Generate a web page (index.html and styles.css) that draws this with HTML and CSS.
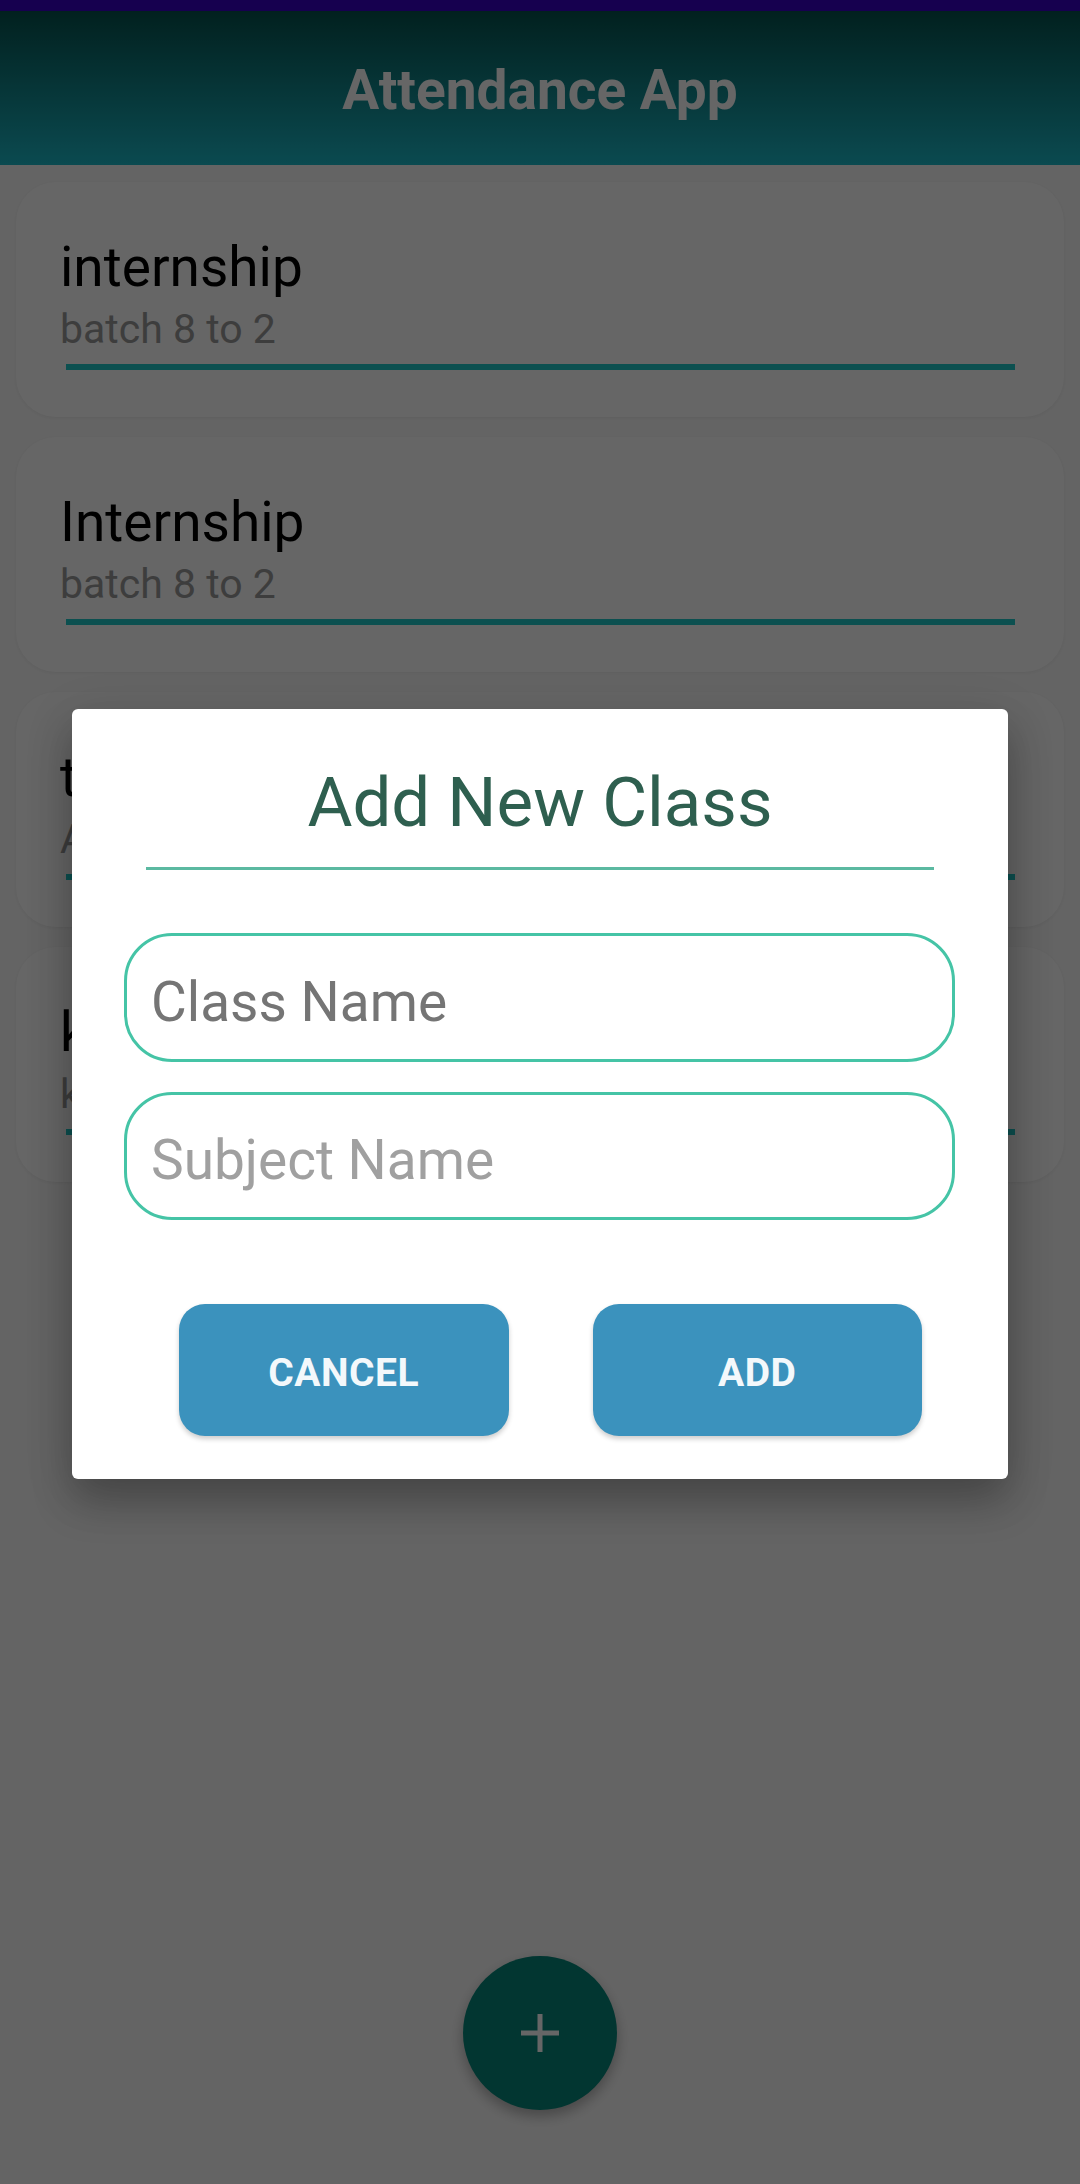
FILE: index.html
```html
<!DOCTYPE html>
<html lang="en">
<head>
<meta charset="utf-8">
<title>Attendance App</title>
<link rel="stylesheet" href="styles.css">
</head>
<body>
<div class="screen">
  <div class="statusbar"></div>
  <header class="appbar">
    <h1 class="appbar-title">Attendance App</h1>
  </header>

  <main class="class-list">
    <div class="class-card">
      <div class="class-name">internship</div>
      <div class="class-subject">batch 8 to 2</div>
      <div class="class-rule"></div>
    </div>
    <div class="class-card">
      <div class="class-name">Internship</div>
      <div class="class-subject">batch 8 to 2</div>
      <div class="class-rule"></div>
    </div>
    <div class="class-card">
      <div class="class-name">test</div>
      <div class="class-subject">Android</div>
      <div class="class-rule"></div>
    </div>
    <div class="class-card">
      <div class="class-name">kk</div>
      <div class="class-subject">kk</div>
      <div class="class-rule"></div>
    </div>
  </main>

  <button class="fab" type="button" aria-label="Add class">
    <svg class="fab-icon" viewBox="0 0 38 38" width="38" height="38">
      <rect x="16.5" y="0" width="5" height="38" fill="#ffffff"/>
      <rect x="0" y="16.5" width="38" height="5" fill="#ffffff"/>
    </svg>
  </button>

  <div class="scrim"></div>

  <div class="dialog-layer">
    <div class="dialog">
      <h2 class="dialog-title">Add New Class</h2>
      <div class="dialog-rule"></div>
      <input class="field field-class" type="text" placeholder="Class Name">
      <input class="field field-subject" type="text" placeholder="Subject Name">
      <div class="dialog-actions">
        <button class="action-btn" type="button">CANCEL</button>
        <button class="action-btn" type="button">ADD</button>
      </div>
    </div>
  </div>
</div>
</body>
</html>
```

FILE: styles.css
```css
* {
  box-sizing: border-box;
}

html, body {
  margin: 0;
  padding: 0;
}

body {
  background: #656565;
  font-family: Roboto, "Noto Sans", "Liberation Sans", sans-serif;
}

.screen {
  position: relative;
  width: 1080px;
  height: 2184px;
  overflow: hidden;
  background: #fbfbfb;
}

.statusbar {
  height: 11px;
  background: #3700c6;
}

.appbar {
  height: 154px;
  display: flex;
  align-items: center;
  justify-content: center;
  padding-top: 4px;
  background: linear-gradient(to bottom, #05524e 0%, #1cb9c8 100%);
}

.appbar-title {
  margin: 0;
  font-size: 55px;
  font-weight: 700;
  color: #ffffff;
  line-height: 1.172;
}

.class-list {
  display: flex;
  flex-direction: column;
  gap: 20px;
  padding: 17px 16px 0;
}

.class-card {
  background: #ffffff;
  border-radius: 40px;
  padding: 54px 49px 47px 44px;
  box-shadow: 0 1px 4px rgba(0, 0, 0, 0.07);
}

.class-name {
  font-size: 55px;
  line-height: 62px;
  color: #000000;
}

.class-subject {
  margin-top: 7px;
  font-size: 41px;
  line-height: 49px;
  color: #999999;
}

.class-rule {
  margin-top: 10px;
  margin-left: 6px;
  height: 6px;
  background: #20c8c8;
}

.fab {
  position: absolute;
  left: calc(50% - 77px);
  bottom: 74px;
  width: 154px;
  height: 154px;
  border: none;
  border-radius: 50%;
  background: #05877a;
  display: flex;
  align-items: center;
  justify-content: center;
  padding: 0;
  box-shadow: 0 6px 14px rgba(0, 0, 0, 0.3);
}

.fab-icon {
  display: block;
}

.scrim {
  position: absolute;
  inset: 0;
  background: rgba(0, 0, 0, 0.6);
}

.dialog-layer {
  position: absolute;
  inset: 0;
  display: flex;
  align-items: center;
  justify-content: center;
  padding-top: 4px;
}

.dialog {
  width: 936px;
  background: #ffffff;
  border-radius: 6px;
  padding: 54px 0 43px;
  box-shadow: 0 24px 40px rgba(0, 0, 0, 0.22), 0 10px 50px rgba(0, 0, 0, 0.14);
}

.dialog-title {
  margin: 0;
  text-align: center;
  font-size: 69px;
  font-weight: 400;
  line-height: 80px;
  color: #2e5f4f;
}

.dialog-rule {
  margin: 24px 74px 0;
  height: 3px;
  background: #5bb9a1;
}

.field {
  display: block;
  width: 831px;
  height: 129px;
  margin: 63px 0 0 52px;
  padding: 8px 24px 0;
  border: 3px solid #45c4a6;
  border-radius: 48px;
  background: #ffffff;
  font-family: Roboto, "Noto Sans", "Liberation Sans", sans-serif;
  font-size: 55px;
  color: #222222;
  outline: none;
}

.field-subject {
  margin-top: 30px;
  height: 128px;
}

.field-class::placeholder {
  color: #757575;
  opacity: 1;
}

.field-subject::placeholder {
  color: #a0a0a0;
  opacity: 1;
}

.dialog-actions {
  display: flex;
  gap: 84px;
  margin-top: 84px;
  padding: 0 86px 0 107px;
}

.action-btn {
  flex: 1;
  height: 132px;
  border: none;
  border-radius: 26px;
  background: #3b92bd;
  color: #f3f8fb;
  font-family: Roboto, "Noto Sans", "Liberation Sans", sans-serif;
  font-size: 39px;
  font-weight: 700;
  letter-spacing: 0.5px;
  padding: 5px 0 0;
  box-shadow: 0 3px 5px rgba(0, 0, 0, 0.2);
}
```
